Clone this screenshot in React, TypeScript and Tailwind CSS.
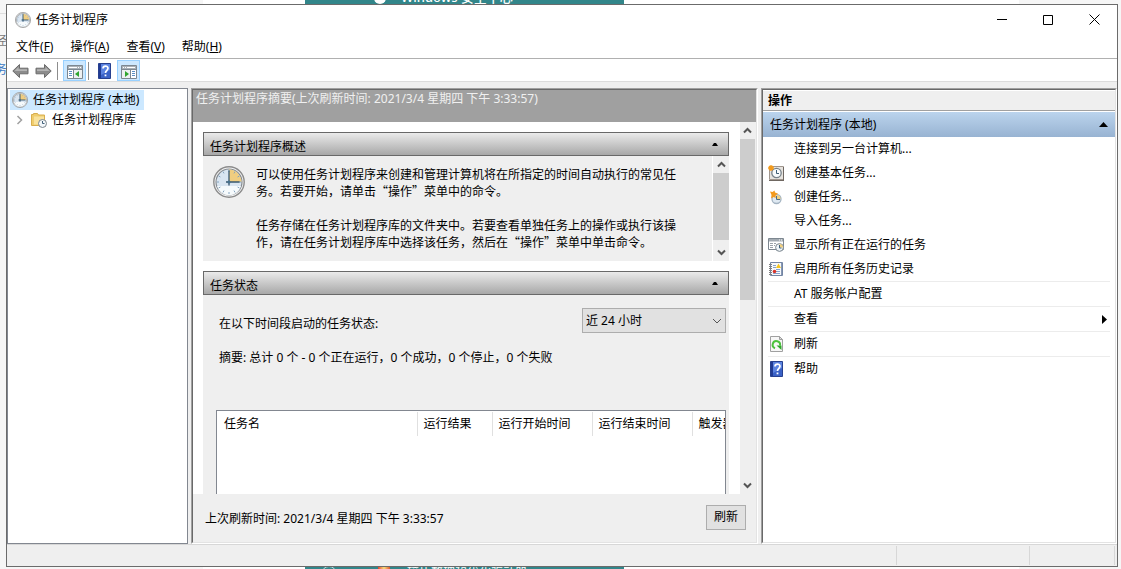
import type { ReactNode } from "react";

const REFRESHED = "2021/3/4 星期四 下午 3:33:57";

function ClockIcon({ size }: { size: number }) {
  const hands = size > 16 ? 1.3 : 1.9;
  return (
    <svg width={size} height={size} viewBox="0 0 32 32" className="shrink-0" aria-hidden="true">
      <circle cx="16" cy="16" r="15.2" fill="#f4f4f4" stroke="#8b8b8b" strokeWidth="1.4" />
      <circle cx="16" cy="16" r="13" fill="#d9e5f1" stroke="#858b91" strokeWidth="1.2" />
      <path d="M4 20a12.4 12.4 0 0 0 24 0z" fill="#f6fafc" />
      <path d="M16 16V3.6A12.4 12.4 0 0 1 28.4 16z" fill="#f0cd80" />
      <path
        d="M16 4v2M16 26v2M4 16h2M26 16h2M10 5.600l1 1.800M22 5.600l-1 1.800M5.600 10l1.800 1M26.400 10l-1.800 1M5.600 22l1.800-1M26.400 22l-1.800-1M10 26.400l1-1.800M22 26.400l-1-1.800"
        stroke="#86a5c0"
      />
      <path d="M16 4.500v15M13 16h13.500" stroke="#39586f" strokeWidth={hands} />
      <circle cx="16" cy="16" r="1.6" fill="#456f8d" />
    </svg>
  );
}

function FolderClockIcon() {
  return (
    <svg width="16" height="16" viewBox="0 0 16 16" className="shrink-0" aria-hidden="true">
      <path d="M.5 2.500h2V1.500h4l1 1.500h6v10.500H.5z" fill="#f0cd6d" stroke="#d8ae4e" />
      <path d="M3 4.500h10v8H3z" fill="#f9e29c" />
      <circle cx="11.500" cy="11.500" r="4" fill="#f3f7fa" stroke="#7c868e" />
      <path d="M11.500 9v2.500h2" fill="none" stroke="#41617a" />
    </svg>
  );
}

function ArrowIcon({ flip }: { flip?: boolean }) {
  return (
    <svg width="17" height="16" viewBox="0 0 17 16" className={flip ? "-scale-x-100" : ""} aria-hidden="true">
      <path d="M.8 8 7.500 1.500v3.700H16v5.600H7.500v3.700z" fill="#8c8c8c" stroke="#6b6b6b" />
      <path d="M2.500 8 6.500 4v2.200H15v1.800z" fill="#b4b4b4" />
    </svg>
  );
}

function PaneIcon({ flip }: { flip?: boolean }) {
  return (
    <svg width="16" height="14" viewBox="0 0 16 14" className={flip ? "-scale-x-100" : ""} aria-hidden="true">
      <path d="M.5.500h15v13H.5z" fill="#fff" stroke="#7d8790" />
      <path d="M1 1h14v3H1z" fill="#a9b1b8" />
      <path d="M2 2.500h8M11 2.500h1M13 2.500h1" stroke="#fff" />
      <path d="M1 4.500h14M6.500 5v8" stroke="#7d8790" />
      <path d="M7 5h8v8H7z" fill="#edf0f2" />
      <path d="M2 6.500h3M2 8.500h3M2 10.500h3" stroke="#5b8fc4" />
      <path d="M12 6v6L8 9z" fill="#2fa52f" />
    </svg>
  );
}

function HelpIcon() {
  return (
    <svg width="13" height="16" viewBox="0 0 13 16" aria-hidden="true">
      <path d="M.5.500h12v15H.5z" fill="#3a61c6" stroke="#27408f" />
      <path d="M1 1h2v14H1z" fill="#203a93" />
      <path d="M3 1h9v6L3 12z" fill="#5b83e0" />
      <path d="M5 5.500C5 2.400 10 2.400 10 5.300c0 2-2.500 2-2.500 4.700" fill="none" stroke="#fff" strokeWidth="1.7" />
      <path d="M6.600 11.500h1.800v1.800H6.600z" fill="#fff" />
    </svg>
  );
}

function BasicTaskIcon() {
  return (
    <svg width="16" height="16" viewBox="0 0 16 16" aria-hidden="true">
      <path d="M1.500 1.500h14v13h-14z" fill="#e6e3de" stroke="#a0968e" />
      <path d="M1 15.500h15M15.500 2v14" stroke="#6f6761" />
      <circle cx="8.500" cy="8" r="4.700" fill="#f8fbfc" stroke="#77828a" strokeWidth="1.3" />
      <path d="M8.500 5v3.500H11" fill="none" stroke="#3d5d74" />
      <path d="M3 0v6M0 3h6M1 1l4 4M5 1 1 5" stroke="#f29a1c" strokeWidth="1.400" />
    </svg>
  );
}

function NewTaskIcon() {
  return (
    <svg width="16" height="16" viewBox="0 0 16 16" aria-hidden="true">
      <circle cx="8.500" cy="10" r="4.500" fill="#dfe9f2" stroke="#a3b3c2" strokeWidth="1.300" />
      <path d="M8.500 10V6A4 4 0 0 1 12.500 10z" fill="#f1cf7e" />
      <path d="M8.500 7v3.500H12" fill="none" stroke="#4b6b83" />
      <path d="m2 2.500 2.500.5L6.500 1.500l.5 2 3 1L7.500 6.500l.3 2.500L5.500 8 3 9.500l.5-3.500z" fill="#f39a1d" />
    </svg>
  );
}

function RunningIcon() {
  return (
    <svg width="16" height="16" viewBox="0 0 16 16" aria-hidden="true">
      <path d="M.5 1.500h15v11H.5z" fill="#fff" stroke="#7d8790" />
      <path d="M1 2h14v2.500H1z" fill="#a3abb2" />
      <path d="M11 3h1M13 3h1" stroke="#fff" />
      <path d="M2 6.500h3M2 8.500h3M2 10.500h3M6 6.500h2M6 8.500h1" stroke="#9aa2a9" />
      <circle cx="11.500" cy="10.500" r="3.900" fill="#eef4f8" stroke="#7b868e" />
      <path d="M11.500 10.500V7a3.500 3.500 0 0 1 3.500 3.500z" fill="#f1cf7e" />
      <path d="M11.500 8v3h2" fill="none" stroke="#41617a" />
    </svg>
  );
}

function HistoryIcon() {
  return (
    <svg width="16" height="16" viewBox="0 0 16 16" aria-hidden="true">
      <path d="M2.500 1.500h12v13h-12z" fill="#f7f9fb" stroke="#7385a3" />
      <path d="M13.500 2v12" stroke="#8798b5" />
      <path d="M1 3.500h3M1 5.500h3M1 7.500h3M1 9.500h3M1 11.500h3M1 13.500h3" stroke="#808080" />
      <path d="M5 4.500h3M5 6.500h3M8 10.500h4M5 12.500h7M8 8.500h4" stroke="#86a3cc" />
      <path d="M10.500 2.500 13 7H8z" fill="#f5c51e" />
      <circle cx="6.500" cy="10.500" r="1.800" fill="#d8342b" />
    </svg>
  );
}

function RefreshIcon() {
  return (
    <svg width="16" height="16" viewBox="0 0 16 16" aria-hidden="true">
      <path d="M2.500.500h9l3 3v12h-12z" fill="#f7f7f7" stroke="#a0a0a0" />
      <path d="M11.500.500v3h3z" fill="#ddd" stroke="#a0a0a0" />
      <path d="M7 12.200A3.700 3.700 0 1 1 12 9.500" fill="none" stroke="#4cc23c" strokeWidth="2" />
      <path d="M8.500 9.500h5v4.500z" fill="#2fa82a" />
    </svg>
  );
}

function Caret({ down }: { down?: boolean }) {
  return (
    <svg width="9" height="7" viewBox="0 0 9 7" className={down ? "rotate-180" : ""} aria-hidden="true">
      <path d="M1 5.500 4.500 2 8 5.500" fill="none" stroke="#555" strokeWidth="2" />
    </svg>
  );
}

function ScrollBar({ width, thumb }: { width: string; thumb: string }) {
  return (
    <div className={`flex shrink-0 flex-col bg-[#efefef] ${width}`}>
      <button aria-label="向上滚动" className="flex h-[17px] shrink-0 items-center justify-center">
        <Caret />
      </button>
      <div className="min-h-0 flex-1">
        <div className={`bg-[#cdcdcd] ${thumb}`} />
      </div>
      <button aria-label="向下滚动" className="flex h-[17px] shrink-0 items-center justify-center">
        <Caret down />
      </button>
    </div>
  );
}

function SectionHeader({ title }: { title: string }) {
  return (
    <div className="flex h-6 shrink-0 items-center justify-between border border-[#696969] bg-linear-to-b from-[#ebebeb] to-[#a8a8a8] pr-[5px] pl-1.5">
      <h2 className="pt-1.5">{title}</h2>
      <button aria-label={`折叠${title}`} className="flex size-4 items-center justify-center">
        <svg width="6" height="3" viewBox="0 0 6 3" aria-hidden="true">
          <path d="M2 0h2l2 3H0z" fill="#000" />
        </svg>
      </button>
    </div>
  );
}

const menus = [
  { label: "文件", key: "F" },
  { label: "操作", key: "A" },
  { label: "查看", key: "V" },
  { label: "帮助", key: "H" },
];

const actions: { label: string; icon?: ReactNode; line?: boolean; submenu?: boolean }[] = [
  { label: "连接到另一台计算机..." },
  { label: "创建基本任务...", icon: <BasicTaskIcon /> },
  { label: "创建任务...", icon: <NewTaskIcon /> },
  { label: "导入任务..." },
  { label: "显示所有正在运行的任务", icon: <RunningIcon /> },
  { label: "启用所有任务历史记录", icon: <HistoryIcon /> },
  { label: "AT 服务帐户配置", line: true },
  { label: "查看", line: true, submenu: true },
  { label: "刷新", icon: <RefreshIcon />, line: true },
  { label: "帮助", icon: <HelpIcon />, line: true },
];

// two-tone sunken edge: the outer line goes on the wrapper, the inner one on its child
const outerEdge = "border border-t-[#a0a0a0] border-l-[#a0a0a0] border-r-white border-b-white";
const innerEdge = "border border-t-[#696969] border-l-[#696969] border-r-[#e3e3e3] border-b-[#e3e3e3]";

function Backdrop() {
  return (
    <div className="absolute inset-0 overflow-hidden bg-[#f6f6f6]" aria-hidden="true">
      <div className="absolute inset-y-0 right-[102px] left-[203px] bg-white" />
      <div className="absolute inset-y-0 left-[305px] w-[319px] bg-[#32868a] text-white">
        <span className="absolute top-[-8px] left-[69px] size-3 rounded-full bg-white" />
        <span className="absolute top-[-12px] left-24 text-[13px] font-medium">Windows 安全中心</span>
        <span className="absolute bottom-[-13px] left-4 size-4 rounded-full border border-white/70" />
        <span className="absolute bottom-[-4px] left-[73px] h-[6px] w-3 bg-linear-to-r from-[#e33b2e] via-[#f4dc7c] to-[#d9512c]" />
        <span className="absolute bottom-[-13px] left-[102px]">碎片整理和优化驱动器</span>
      </div>
      <div className="absolute top-[13px] left-0 h-px w-2 bg-[#dedede]" />
      <span className="absolute top-8 left-[-5px] text-[#777]">径</span>
      <span className="absolute top-[61px] left-[-5px] text-[#3a78c2]">务</span>
    </div>
  );
}

function TitleBar() {
  return (
    <header className="flex h-[29px] items-center pl-2">
      <ClockIcon size={16} />
      <h1 className="flex-1 pl-[5px]">任务计划程序</h1>
      <button aria-label="最小化" className="flex h-full w-[46px] items-center justify-center">
        <svg width="10" height="11" aria-hidden="true">
          <path d="M0 5.500h10" stroke="#000" />
        </svg>
      </button>
      <button aria-label="最大化" className="flex h-full w-[46px] items-center justify-center">
        <svg width="10" height="10" aria-hidden="true">
          <path d="M.5.500h9v9h-9z" fill="none" stroke="#000" />
        </svg>
      </button>
      <button aria-label="关闭" className="flex h-full w-[46px] items-center justify-center">
        <svg width="11" height="11" aria-hidden="true">
          <path d="m.5.500 10 10M10.500.500l-10 10" stroke="#000" />
        </svg>
      </button>
    </header>
  );
}

function Toolbar() {
  return (
    <div className="flex h-[23px] items-center border-b border-[#dcdcdc] pt-px pl-[5px]">
      <button aria-label="后退">
        <ArrowIcon />
      </button>
      <button aria-label="前进" className="ml-1.5">
        <ArrowIcon flip />
      </button>
      <div className="ml-[5px] h-[18px] w-px bg-[#8d8d8d]" />
      <button
        aria-label="显示/隐藏控制台树"
        className="ml-[5px] flex h-[21px] w-[23px] items-center justify-center border border-[#99d1ff] bg-[#cce8ff] pt-0.5"
      >
        <PaneIcon />
      </button>
      <div className="ml-0.5 h-[18px] w-px bg-[#8d8d8d]" />
      <button aria-label="帮助" className="ml-[9px]">
        <HelpIcon />
      </button>
      <button
        aria-label="显示/隐藏操作窗格"
        className="ml-1.5 flex h-[21px] w-[23px] items-center justify-center border border-[#99d1ff] bg-[#cce8ff] pt-0.5"
      >
        <PaneIcon flip />
      </button>
    </div>
  );
}

function TreePane() {
  return (
    <nav className="w-[181px] shrink-0 border border-[#828790] bg-white pt-px pl-0.5">
      <button className="flex h-5 items-center gap-[5px] bg-[#cce8ff] pr-[5px] pl-0.5">
        <ClockIcon size={16} />
        任务计划程序 (本地)
      </button>
      <button className="flex h-5 items-center pl-1.5">
        <svg width="7" height="10" viewBox="0 0 7 10" className="mr-2" aria-hidden="true">
          <path d="m1.500 1 4 4-4 4" fill="none" stroke="#a0a0a0" strokeWidth="1.500" />
        </svg>
        <FolderClockIcon />
        <span className="pl-[5px]">任务计划程序库</span>
      </button>
    </nav>
  );
}

function Overview() {
  return (
    <section className="shrink-0">
      <SectionHeader title="任务计划程序概述" />
      <div className="flex h-[105px] bg-[#efefef]">
        <div className="flex min-w-0 flex-1 gap-[11px] pt-2.5 pl-2.5">
          <ClockIcon size={32} />
          <div className="-mt-px min-w-0 flex-1 pr-8 font-['Noto_Sans_CJK_SC',sans-serif] leading-[17px]">
            <p>
              可以使用任务计划程序来创建和管理计算机将在所指定的时间自动执行的常见任务。若要开始，请单击“操作”菜单中的命令。
            </p>
            <p className="pt-[17px]">
              任务存储在任务计划程序库的文件夹中。若要查看单独任务上的操作或执行该操作，请在任务计划程序库中选择该任务，然后在“操作”菜单中单击命令。
            </p>
          </div>
        </div>
        <div className="flex border-l border-white">
          <ScrollBar width="w-4" thumb="h-[67px]" />
        </div>
      </div>
    </section>
  );
}

function Status() {
  return (
    <section className="flex min-h-0 flex-1 flex-col">
      <SectionHeader title="任务状态" />
      <div className="flex min-h-0 flex-1 flex-col bg-[#efefef] pt-[13px] pr-[3px] pl-[13px]">
        <div className="flex h-[25px] shrink-0 items-center justify-between pl-[3px]">
          <label htmlFor="period" className="pt-1.5">
            在以下时间段启动的任务状态:
          </label>
          <div className="relative">
            <select
              id="period"
              className="block h-[25px] w-36 appearance-none border border-[#adadad] bg-[#e1e1e1] pl-[3px]"
            >
              <option>近 24 小时</option>
            </select>
            <svg
              width="10"
              height="6"
              viewBox="0 0 10 6"
              className="pointer-events-none absolute top-2.5 right-1"
              aria-hidden="true"
            >
              <path d="m1 1 4 4 4-4" fill="none" stroke="#555" />
            </svg>
          </div>
        </div>
        <p className="shrink-0 pt-4 pl-[3px]">
          摘要: 总计 0 个 - 0 个正在运行，0 个成功，0 个停止，0 个失败
        </p>
        <div className="mt-[43px] min-h-0 flex-1 overflow-hidden border border-b-0 border-[#828790] bg-white">
          <table className="mt-px w-full table-fixed border-collapse text-left">
            <thead>
              <tr className="h-6 whitespace-nowrap">
                <th className="w-[200px] border-r border-[#e0e0e0] pl-[7px] font-normal">任务名</th>
                <th className="w-[75px] border-r border-[#e0e0e0] pl-1.5 font-normal">运行结果</th>
                <th className="w-[100px] border-r border-[#e0e0e0] pl-1.5 font-normal">运行开始时间</th>
                <th className="w-[100px] border-r border-[#e0e0e0] pl-1.5 font-normal">运行结束时间</th>
                <th className="pl-1.5 font-normal">触发器</th>
              </tr>
            </thead>
          </table>
        </div>
      </div>
    </section>
  );
}

function SummaryPane() {
  return (
    <main className={`ml-[3px] flex min-w-0 flex-1 ${outerEdge}`}>
      <div className={`flex min-w-0 flex-1 flex-col bg-[#efefef] ${innerEdge}`}>
        <div className="h-8 shrink-0 bg-[#a0a0a0] pl-[3px] text-[#f0f0f0]">
          任务计划程序摘要(上次刷新时间: {REFRESHED})
        </div>
        <div className="mr-px flex min-h-0 flex-1 bg-white">
          <div className="flex min-h-0 min-w-0 flex-1 flex-col gap-2.5 pt-2.5 pr-[11px] pl-2.5">
            <Overview />
            <Status />
          </div>
          <ScrollBar width="w-[15px]" thumb="h-[161px]" />
        </div>
        <footer className="flex h-12 shrink-0 items-center justify-between pr-2.5 pb-0.5 pl-3">
          <span className="pt-1">上次刷新时间: {REFRESHED}</span>
          <button className="h-[25px] w-10 border border-[#adadad] bg-[#e1e1e1]">刷新</button>
        </footer>
      </div>
    </main>
  );
}

function ActionsPane() {
  return (
    <aside className={`ml-[3px] flex w-[356px] shrink-0 ${outerEdge}`}>
      <div className={`min-w-0 flex-1 bg-white ${innerEdge}`}>
        <h2 className="mt-px h-5 border-b border-[#a0a0a0] bg-[#efefef] pl-[5px] leading-5 font-bold">操作</h2>
        <div className="mt-px flex h-[25px] items-center justify-between bg-linear-to-b from-[#bbd4ed] to-[#98b3d2] pr-1.5 pl-[7px]">
          <h3>任务计划程序 (本地)</h3>
          <button aria-label="折叠" className="p-px">
            <svg width="9" height="5" viewBox="0 0 9 5" aria-hidden="true">
              <path d="M4.500 0 9 5H0z" fill="#000" />
            </svg>
          </button>
        </div>
        <ul className="px-[5px]">
          {actions.map((action) => (
            <li key={action.label} className={action.line ? "border-t border-[#ececec]" : ""}>
              <button className="flex h-6 w-full items-center text-left">
                <span className="flex w-4 justify-center">{action.icon}</span>
                <span className="flex-1 pl-2.5">{action.label}</span>
                {action.submenu && (
                  <svg width="8" height="9" viewBox="0 0 8 9" aria-hidden="true">
                    <path d="M0 0v9l5-4.500z" fill="#000" />
                  </svg>
                )}
              </button>
            </li>
          ))}
        </ul>
      </div>
    </aside>
  );
}

export default function App() {
  return (
    <div className="relative h-screen pt-1 pr-[3px] pb-0.5 pl-1.5 font-['Noto_Sans','Noto_Sans_CJK_SC',sans-serif] text-[12px] leading-[18px] text-black">
      <Backdrop />
      <div className="relative flex h-full flex-col border border-[#6b6b6b] bg-white">
        <TitleBar />
        <div className="flex h-[25px] items-center gap-[17px] border-b border-[#b0b0b0] pt-0.5 pl-[9px]">
          {menus.map((menu) => (
            <button key={menu.key}>
              {menu.label}(<u>{menu.key}</u>)
            </button>
          ))}
        </div>
        <Toolbar />
        <div className="flex min-h-0 flex-1 bg-[#efefef] pt-1.5">
          <TreePane />
          <SummaryPane />
          <ActionsPane />
        </div>
        <footer className="flex h-[22px] shrink-0 justify-end border-t border-[#d7d7d7] bg-[#efefef] py-px pr-0.5">
          <div className="w-[133px] border-l border-[#d7d7d7]" />
          <div className="w-[86px] border-x border-[#d7d7d7]" />
        </footer>
      </div>
    </div>
  );
}
